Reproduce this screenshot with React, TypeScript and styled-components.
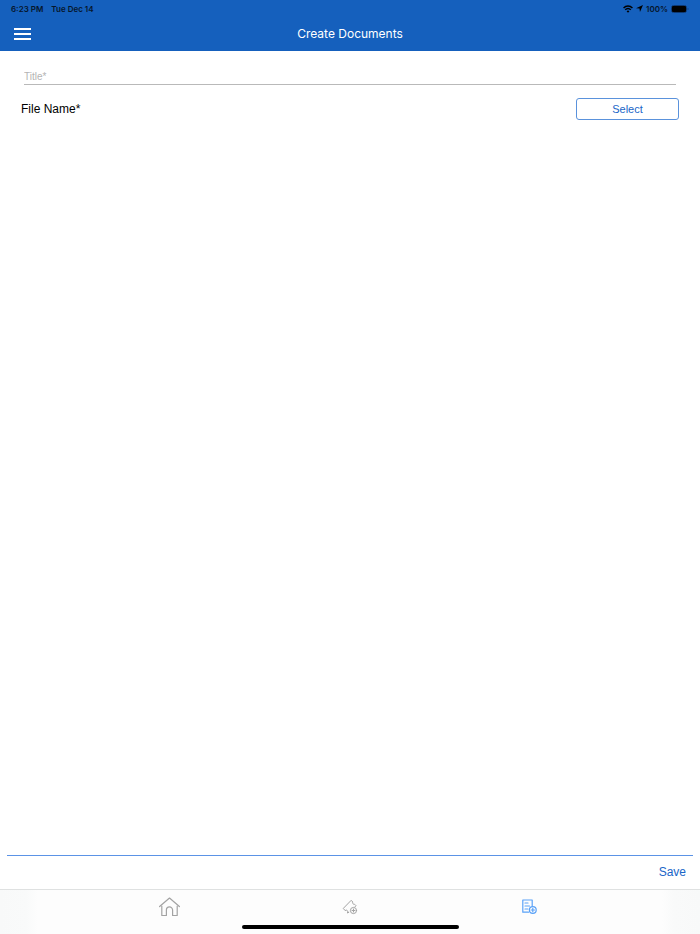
import React, { FC, useState } from 'react'
import styled, { createGlobalStyle } from 'styled-components'

const BLUE = '#1560bd'
const LINK_BLUE = '#1a66c8'

const GlobalStyle = createGlobalStyle`
  * {
    box-sizing: border-box;
  }

  body {
    margin: 0;
    background: #fff;
    font-family: 'Liberation Sans', Arial, sans-serif;
  }

  button {
    padding: 0;
    border: 0;
    background: none;
    font-family: inherit;
    cursor: pointer;
  }
`

const Page = styled.div`
  display: flex;
  flex-direction: column;
  min-height: 100vh;
`

const Header = styled.header`
  background: ${BLUE};
  font-family: Inter, sans-serif;
`

const StatusBar = styled.div`
  display: flex;
  align-items: center;
  justify-content: space-between;
  height: 17px;
  padding: 0 11px;
  color: #06162c;
  font-weight: 600;
  font-size: 8px;
  line-height: 16px;
`

const StatusGroup = styled.div<{ $gap: number }>`
  display: flex;
  align-items: center;
  column-gap: ${({ $gap }) => $gap}px;

  svg {
    display: block;
  }
`

const NavBar = styled.div`
  display: grid;
  grid-template-columns: 44px 1fr 44px;
  align-items: center;
  height: 34px;
`

const MenuButton = styled.button`
  display: flex;
  justify-content: center;
  align-items: center;
  height: 34px;
`

const PageTitle = styled.h1`
  margin: 0;
  color: #fff;
  font-weight: 400;
  font-size: 12px;
  line-height: 16px;
  text-align: center;
`

const Form = styled.form`
  display: flex;
  flex: 1;
  flex-direction: column;
`

const Fields = styled.div`
  flex: 1;
  padding: 17px 21px;
`

const TitleInput = styled.input`
  display: block;
  width: calc(100% - 6px);
  height: 17px;
  margin: 0 3px;
  padding: 0;
  border: 0;
  border-bottom: 1px solid #b9b9b9;
  border-radius: 0;
  outline: 0;
  background: transparent;
  color: #000;
  font-family: inherit;
  font-size: 10px;

  &::placeholder {
    color: #b4b4b4;
    opacity: 1;
  }
`

const FileRow = styled.div`
  display: flex;
  align-items: center;
  justify-content: space-between;
  margin-top: 13px;
`

const Label = styled.label`
  color: #000;
  font-size: 12px;
  line-height: 16px;
`

const SelectButton = styled.button`
  width: 103px;
  height: 22px;
  border: 1px solid #5a92dc;
  border-radius: 3px;
  color: ${LINK_BLUE};
  font-size: 11px;
`

const Actions = styled.div`
  display: flex;
  justify-content: flex-end;
  height: 34px;
  margin: 0 7px;
  padding: 0 7px 2px;
  border-top: 1px solid #5b93e6;
`

const SaveButton = styled.button`
  color: ${LINK_BLUE};
  font-size: 12px;
`

const TabBar = styled.nav`
  border-top: 1px solid #dfe1e1;
  background: linear-gradient(90deg, #f8f9f9 0, #f9fafa 26px, #fdfdfd 38px, #fdfdfd calc(100% - 38px), #f9fafa calc(100% - 26px), #f8f9f9 100%);
`

const Tabs = styled.div`
  display: flex;
  justify-content: center;
  height: 35px;
  padding-bottom: 2px;
`

const Tab = styled.button<{ $active?: boolean }>`
  display: flex;
  align-items: center;
  justify-content: center;
  width: 180px;
  color: ${({ $active }) => ($active ? '#5aa2f8' : '#a3a3a3')};
`

const HomeIndicator = styled.div`
  width: 31%;
  height: 4px;
  margin: 0 auto 5px;
  border-radius: 2px;
  background: #000;
`

const WifiIcon: FC = () => (
  <svg width="10" height="8" viewBox="0 0 18 14" fill="none" stroke="#000" strokeWidth="2.6" aria-hidden="true">
    <path d="M1 5c4.600-4.600 11.400-4.600 16 0M4 8.500c3-3 7-3 10 0" />
    <path d="M6.500 11a3.600 3.600 0 0 1 5 0L9 13.600z" fill="#000" stroke="none" />
  </svg>
)

const LocationIcon: FC = () => (
  <svg width="7" height="7" viewBox="0 0 12 12" fill="#000" aria-hidden="true">
    <path d="M12 0 6.800 12 6 6.200 0 5.400z" />
  </svg>
)

const BatteryIcon: FC = () => (
  <svg width="18" height="8" viewBox="0 0 18 8" aria-hidden="true">
    <rect x=".5" y=".5" width="15" height="7" rx="2" fill="none" stroke="#0d3974" />
    <rect x="1" y="1" width="14" height="6" rx="1" fill="#000" />
    <path d="M16.700 2.800v2.400c1-.4 1-2 0-2.400z" fill="#0d3974" />
  </svg>
)

const MenuIcon: FC = () => (
  <svg width="17" height="12" viewBox="0 0 17 12" fill="#fff" aria-hidden="true">
    <path d="M0 0h17v2H0zM0 5h17v2H0zM0 10h17v2H0z" />
  </svg>
)

const HomeIcon: FC = () => (
  <svg width="22" height="20" viewBox="0 0 22 20" fill="none" stroke="currentColor" strokeWidth="1.200" strokeLinejoin="round" strokeLinecap="round" aria-hidden="true">
    <path d="M.6 9.500 10.500 1l9.900 8.500" />
    <path d="M2.800 9v9.500h4.600V13a3.100 3.100 0 0 1 6.200 0v5.500h4.600V9" />
  </svg>
)

const TicketIcon: FC = () => (
  <svg width="16" height="16" viewBox="0 0 16 16" fill="none" stroke="currentColor" strokeLinejoin="round" strokeLinecap="round" aria-hidden="true">
    <path d="M6.800 13.300 5.300 14a1.600 1.600 0 0 0-2.200-2.400L1.300 9.400 9.200 1.300l1.600 1.700a1.500 1.500 0 0 0 1.700 2.200l1.500 1.500-1.200 1.300" />
    <circle cx="11.500" cy="11.500" r="3.100" />
    <path d="M11.500 10v3M10 11.500h3" />
  </svg>
)

const DocumentIcon: FC = () => (
  <svg width="16" height="16" viewBox="0 0 16 16" fill="none" stroke="currentColor" strokeWidth="1.200" strokeLinejoin="round" strokeLinecap="round" aria-hidden="true">
    <path d="M6.500 13.200H.8V1h9.400v6.200M3 4h3M3 7h4.500M3 10h3" />
    <circle cx="10.800" cy="11" r="3.400" />
    <path d="M10.800 9.300v3.400M9.100 11h3.400" />
  </svg>
)

const App: FC = () => {
  const [title, setTitle] = useState('')

  const handleTitleChange = (e: React.ChangeEvent<HTMLInputElement>) => {
    setTitle(e.target.value)
  }

  const handleSubmit = (e: React.FormEvent) => {
    e.preventDefault()
  }

  return (
    <Page>
      <GlobalStyle />
      <Header>
        <StatusBar>
          <StatusGroup $gap={8}>
            <span>6:23 PM</span>
            <span>Tue Dec 14</span>
          </StatusGroup>
          <StatusGroup $gap={3}>
            <WifiIcon />
            <LocationIcon />
            <span>100%</span>
            <BatteryIcon />
          </StatusGroup>
        </StatusBar>
        <NavBar>
          <MenuButton type="button" aria-label="Menu">
            <MenuIcon />
          </MenuButton>
          <PageTitle>Create Documents</PageTitle>
        </NavBar>
      </Header>
      <Form onSubmit={handleSubmit}>
        <Fields>
          <TitleInput aria-label="Title" placeholder="Title*" value={title} onChange={handleTitleChange} />
          <FileRow>
            <Label htmlFor="file-select">File Name*</Label>
            <SelectButton id="file-select" type="button">
              Select
            </SelectButton>
          </FileRow>
        </Fields>
        <Actions>
          <SaveButton type="submit">Save</SaveButton>
        </Actions>
      </Form>
      <TabBar>
        <Tabs>
          <Tab type="button" aria-label="Home">
            <HomeIcon />
          </Tab>
          <Tab type="button" aria-label="Create ticket">
            <TicketIcon />
          </Tab>
          <Tab type="button" aria-label="Create document" $active>
            <DocumentIcon />
          </Tab>
        </Tabs>
        <HomeIndicator />
      </TabBar>
    </Page>
  )
}

export default App
